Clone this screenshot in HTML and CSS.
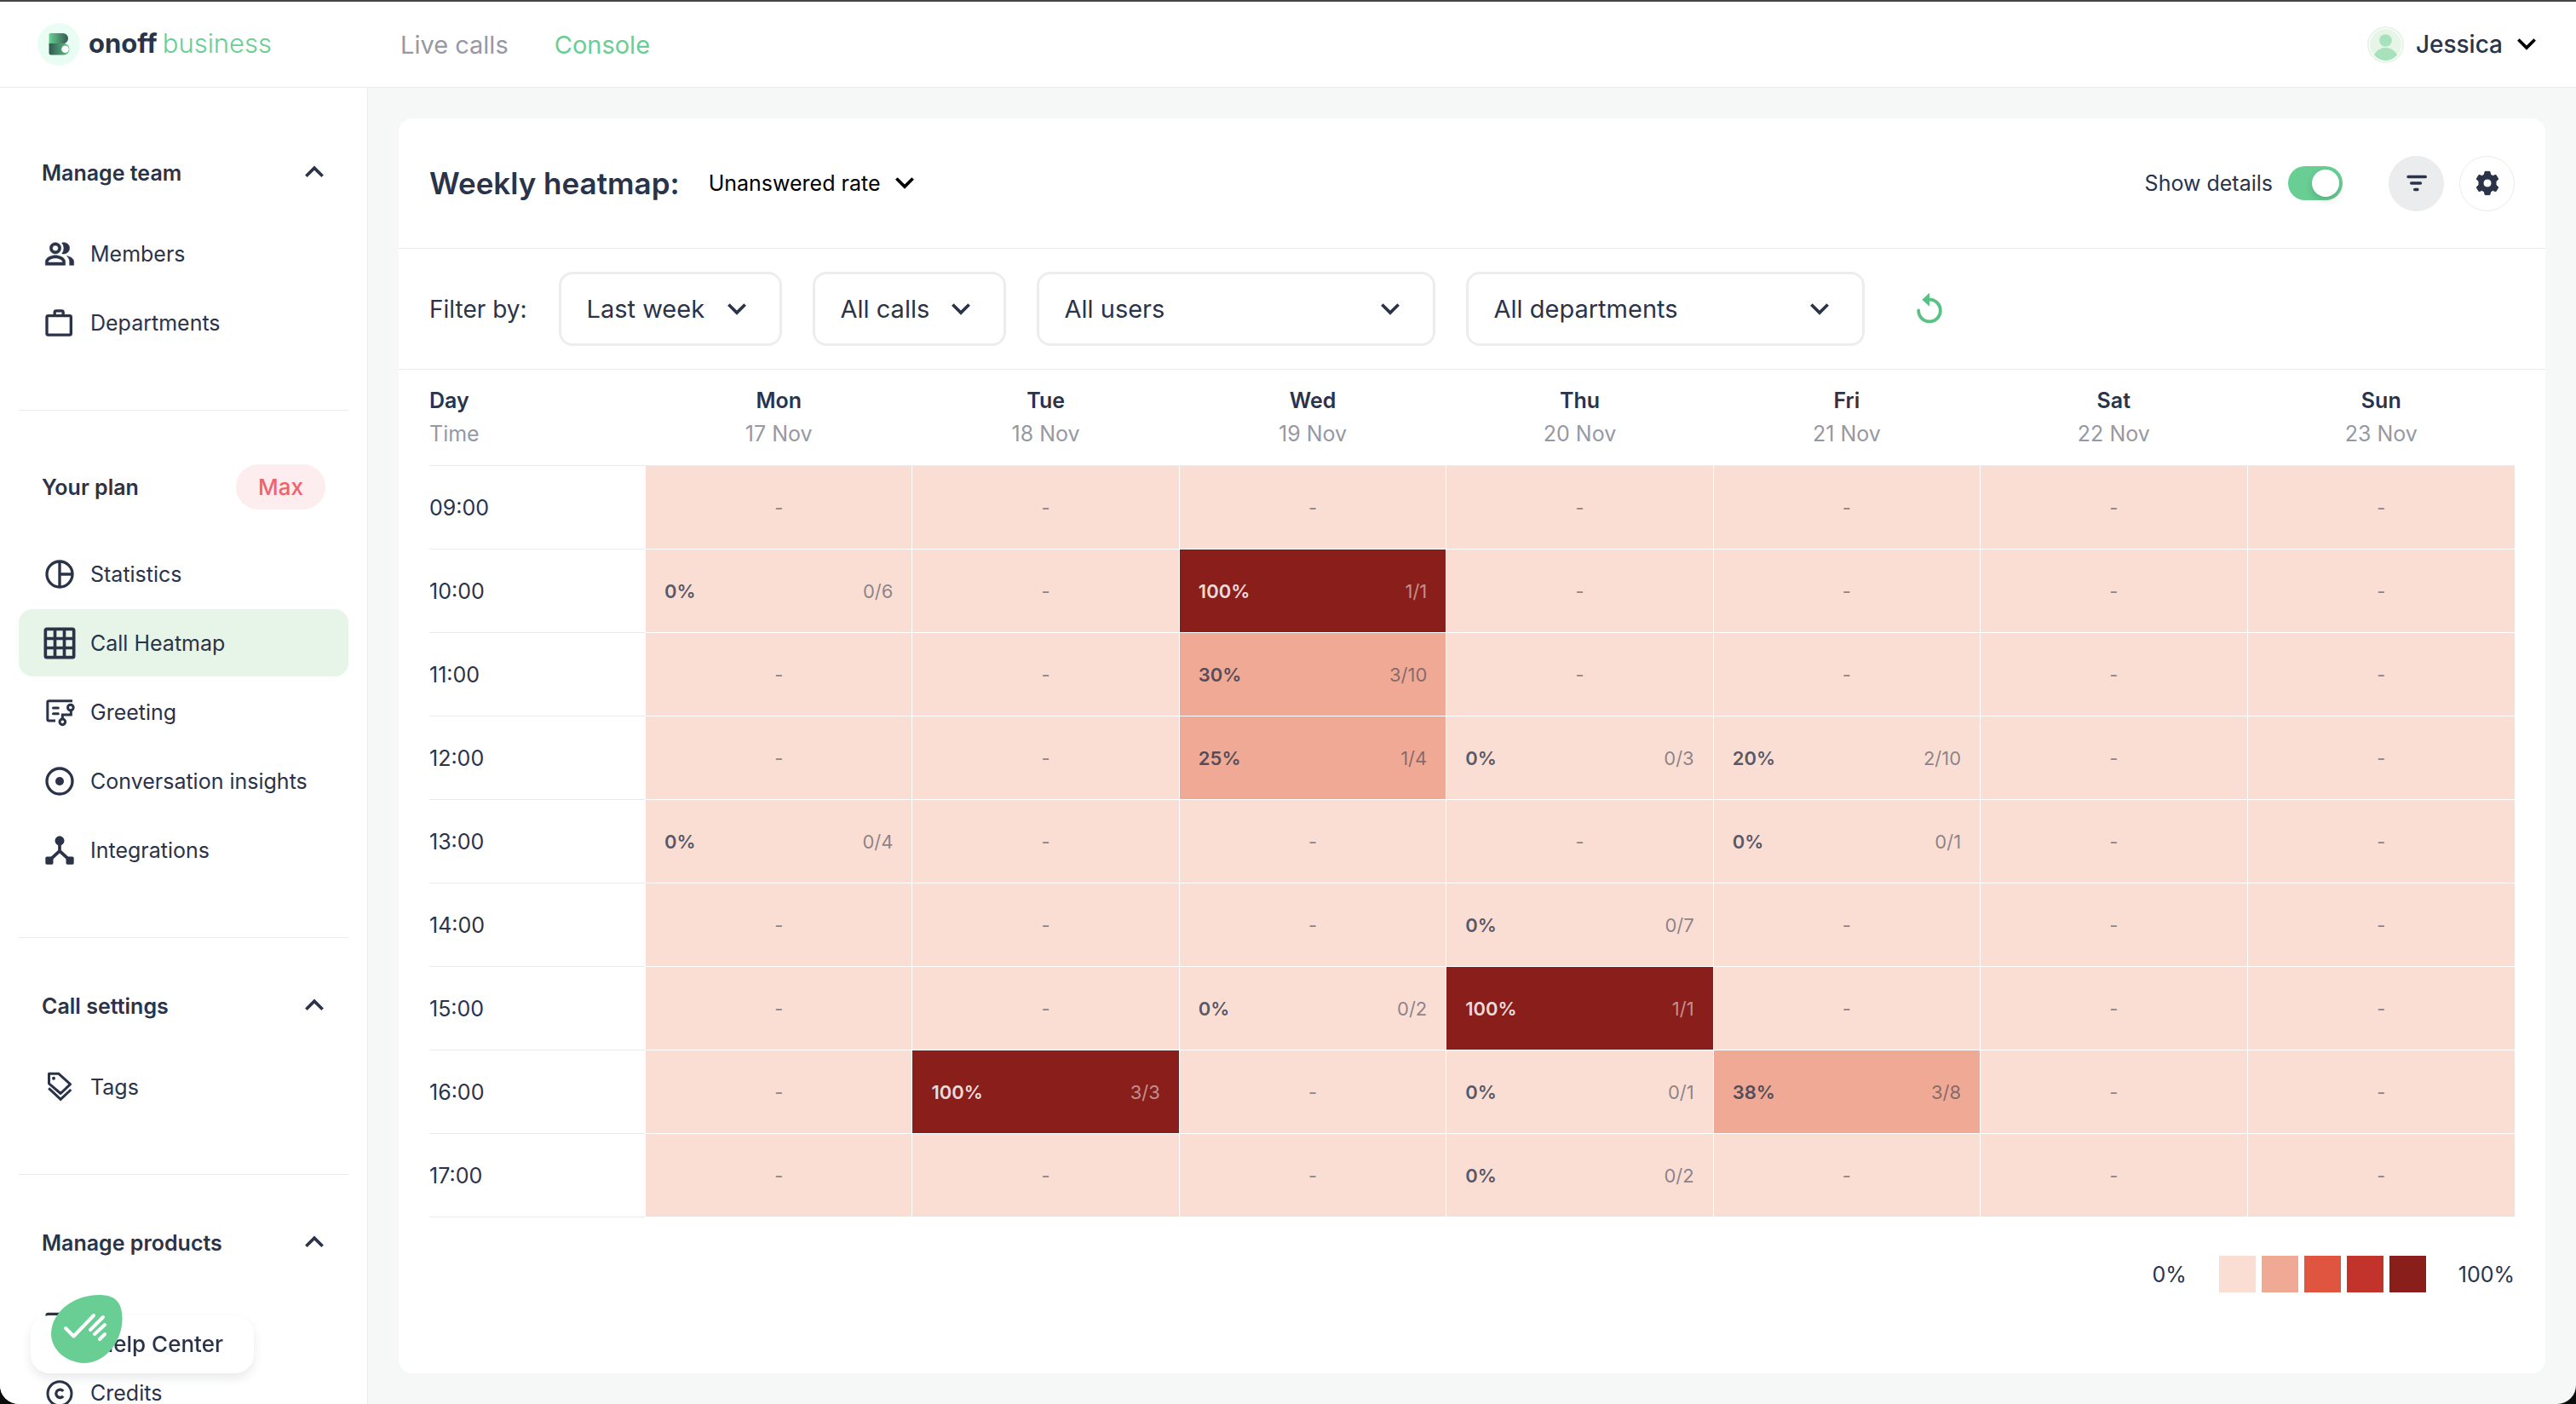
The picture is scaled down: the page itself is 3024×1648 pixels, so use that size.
FILE: index.html
```html
<!DOCTYPE html>
<html lang="en">

<head>
    <meta charset="UTF-8">
    <title>Onoff Business - Call Heatmap</title>
    <link rel="stylesheet" href="styles.css">
</head>

<body>

    <!-- shared icons -->
    <svg class="sprite" aria-hidden="true">
        <symbol id="chevron-down" viewBox="0 0 24 24">
            <path d="M7 9.5l5 5 5-5" fill="none" stroke="currentColor" stroke-width="2.2" stroke-linecap="square" />
        </symbol>
        <symbol id="chevron-up" viewBox="0 0 24 24">
            <path d="M7 13.5l5-5 5 5" fill="none" stroke="currentColor" stroke-width="2.2" stroke-linecap="square" />
        </symbol>
    </svg>

    <header class="topbar">
        <a class="logo" href="#">
            <svg class="logo-mark" viewBox="0 0 50 50">
                <defs>
                    <linearGradient id="mark" x1="0" x2="1">
                        <stop offset="0" stop-color="#68ce93" />
                        <stop offset="1" stop-color="#35594f" />
                    </linearGradient>
                    <linearGradient id="mark2" x1="0" x2="1">
                        <stop offset="0" stop-color="#2f5a50" />
                        <stop offset="1" stop-color="#62c48c" />
                    </linearGradient>
                </defs>
                <circle cx="25" cy="25" r="25" fill="#e9fdf4" />
                <path d="M15 12h15a6 6 0 0 1 6 6c0 3-2 5-4 6H13.500V14a2 2 0 0 1 1.500-2z" fill="url(#mark)" />
                <path d="M13.500 24h18a6.800 6.800 0 0 1 0 13.500H16a2.500 2.500 0 0 1-2.500-2.500z" fill="url(#mark2)" />
                <circle cx="32.500" cy="30.700" r="4.300" fill="#fff" />
            </svg>
            <span class="logo-text"><strong>onoff</strong><span>business</span></span>
        </a>
        <nav class="topnav">
            <a href="#">Live calls</a>
            <a href="#" class="active">Console</a>
        </nav>
        <button class="account" type="button">
            <svg class="avatar" viewBox="0 0 43 43">
                <circle cx="21.500" cy="21.500" r="20.500" fill="#fff" stroke="#e7f5e8" stroke-width="2" />
                <circle cx="21.500" cy="21.500" r="18.500" fill="#e7f5e8" />
                <circle cx="21.500" cy="16.500" r="7.300" fill="#a7e2bc" />
                <path d="M8 33.500c2.500-5.500 8-8.500 13.500-8.500S32.500 28 35 33.500c-3.500 4-8 6.500-13.500 6.500S11.500 37.500 8 33.500z" fill="#a7e2bc" />
            </svg>
            Jessica
            <svg class="icon"><use href="#chevron-down" /></svg>
        </button>
    </header>

    <div class="layout">
        <aside class="sidebar">
            <section class="group">
                <h2>Manage team <svg class="icon"><use href="#chevron-up" /></svg></h2>
                <a href="#">
                    <svg class="icon" viewBox="0 0 24 24" fill="currentColor">
                        <path d="M9 12a4 4 0 1 0 0-8 4 4 0 0 0 0 8zm0-6a2 2 0 1 1 0 4 2 2 0 0 1 0-4zM9 13c-2.700 0-7 1.400-7 4.500V20h14v-2.500C16 14.400 11.700 13 9 13zm5 5H4v-.500C4 16.200 6.800 15 9 15s5 1.200 5 2.500zM15 12a4 4 0 0 0 0-8c-.500 0-1 .100-1.400.200a5.900 5.900 0 0 1 0 7.600c.400.100.900.200 1.400.200zM17 13.500c1.200 1 2 2.300 2 4V20h3v-2.500c0-2.200-2.300-3.500-5-4z" stroke="currentColor" stroke-width=".3" />
                    </svg>
                    Members
                </a>
                <a href="#">
                    <svg class="icon" viewBox="0 0 24 24" fill="none" stroke="currentColor" stroke-width="2">
                        <rect x="3" y="7" width="17" height="13.500" rx="1" />
                        <path d="M8.500 7V4.500a1 1 0 0 1 1-1h4a1 1 0 0 1 1 1V7" />
                    </svg>
                    Departments
                </a>
            </section>

            <section class="group plan">
                <h2>Your plan <span class="badge">Max</span></h2>
                <a href="#">
                    <svg class="icon" viewBox="0 0 24 24" fill="none" stroke="currentColor" stroke-width="2">
                        <circle cx="12" cy="12" r="9" />
                        <path d="M12 3v18M12 12h9" />
                    </svg>
                    Statistics
                </a>
                <a href="#" class="active">
                    <svg class="icon" viewBox="0 0 24 24" fill="none" stroke="currentColor" stroke-width="2.200">
                        <rect x="2" y="2" width="20" height="20" rx="1" />
                        <path d="M8.700 2v20M15.300 2v20M2 8.700h20M2 15.300h20" />
                    </svg>
                    Call Heatmap
                </a>
                <a href="#">
                    <svg class="icon" viewBox="0 0 24 24" fill="none" stroke="currentColor" stroke-width="1.800">
                        <path d="M21 4H4.500a1 1 0 0 0-1 1v12a1 1 0 0 0 1 1H9" />
                        <path d="M7.500 9H11M7.500 13H11" stroke-linecap="round" />
                        <circle cx="19.700" cy="8.700" r="2" />
                        <circle cx="14" cy="18.800" r="2" />
                        <path d="M14 17v-3.200h6v-3" />
                    </svg>
                    Greeting
                </a>
                <a href="#">
                    <svg class="icon" viewBox="0 0 24 24" fill="none" stroke="currentColor" stroke-width="2">
                        <circle cx="12" cy="12" r="9" />
                        <circle cx="12" cy="12" r="3" fill="currentColor" stroke="none" />
                    </svg>
                    Conversation insights
                </a>
                <a href="#">
                    <svg class="icon" viewBox="0 0 24 24" fill="currentColor">
                        <circle cx="12" cy="5.300" r="3.300" />
                        <rect x="2" y="16.500" width="5.500" height="5.500" rx="1" />
                        <rect x="16.500" y="16.500" width="5.500" height="5.500" rx="1" />
                        <path d="M12 6v7M5 19l7-6.500 7 6.500" fill="none" stroke="currentColor" stroke-width="2.200" />
                    </svg>
                    Integrations
                </a>
            </section>

            <section class="group">
                <h2>Call settings <svg class="icon"><use href="#chevron-up" /></svg></h2>
                <a href="#">
                    <svg class="icon" viewBox="0 0 24 24" fill="none" stroke="currentColor" stroke-width="1.800">
                        <path d="M4.500 2.500h6.700l8.300 7.500-6.800 6.500L4.500 9.500z" stroke-linejoin="round" />
                        <path d="M4.300 12.800l8.400 7.800 7.300-6.800" />
                        <circle cx="7.800" cy="5.800" r="1.200" fill="currentColor" stroke="none" />
                    </svg>
                    Tags
                </a>
            </section>

            <section class="group">
                <h2>Manage products <svg class="icon"><use href="#chevron-up" /></svg></h2>
                <a href="#" aria-label="Billing">
                    <svg class="icon" viewBox="0 0 24 24" fill="none" stroke="currentColor" stroke-width="2">
                        <rect x="3" y="5" width="18" height="13" rx="1" />
                    </svg>
                </a>
                <a href="#">
                    <svg class="icon" viewBox="0 0 24 24" fill="none" stroke="currentColor" stroke-width="1.800">
                        <circle cx="12" cy="12.500" r="8.400" />
                        <path d="M14.500 10.800a2.800 2.800 0 1 0 0 3.400" stroke-width="2" />
                    </svg>
                    Credits
                </a>
            </section>
        </aside>

        <main class="content">
            <div class="card">
                <div class="card-header">
                    <h1>Weekly heatmap:</h1>
                    <div class="select metric">
                        <select aria-label="Metric">
                            <option>Unanswered rate</option>
                        </select>
                        <svg class="icon"><use href="#chevron-down" /></svg>
                    </div>
                    <div class="actions">
                        <label for="details">Show details</label>
                        <input type="checkbox" id="details" class="toggle" checked>
                        <button type="button" class="round active" aria-label="Filters">
                            <svg class="icon" viewBox="0 0 24 24" stroke="currentColor" stroke-width="2" stroke-linecap="round">
                                <path d="M6 7.500h12.200M8.200 12h6.500M10.600 16.500h2" />
                            </svg>
                        </button>
                        <button type="button" class="round" aria-label="Settings">
                            <svg class="icon" viewBox="0 0 24 24" fill="currentColor">
                                <path fill-rule="evenodd" d="M10.300 3.800h3.400l.5 2.200 1.600.9 2.200-.7 1.700 2.900-1.700 1.600v2.600l1.700 1.600-1.700 2.900-2.200-.7-1.600.9-.5 2.200h-3.400l-.5-2.200-1.600-.9-2.200.7-1.700-2.900L6 13.300v-2.600L4.300 9.100 6 6.200l2.200.7 1.600-.9zM12 9a3 3 0 1 0 0 6 3 3 0 0 0 0-6z" stroke="currentColor" stroke-width=".6" stroke-linejoin="round" />
                            </svg>
                        </button>
                    </div>
                </div>

                <div class="filters">
                    <span>Filter by:</span>
                    <div class="select box period">
                        <select aria-label="Period">
                            <option>Last week</option>
                        </select>
                        <svg class="icon"><use href="#chevron-down" /></svg>
                    </div>
                    <div class="select box calls">
                        <select aria-label="Calls">
                            <option>All calls</option>
                        </select>
                        <svg class="icon"><use href="#chevron-down" /></svg>
                    </div>
                    <div class="select box wide">
                        <select aria-label="Users">
                            <option>All users</option>
                        </select>
                        <svg class="icon"><use href="#chevron-down" /></svg>
                    </div>
                    <div class="select box wide">
                        <select aria-label="Departments">
                            <option>All departments</option>
                        </select>
                        <svg class="icon"><use href="#chevron-down" /></svg>
                    </div>
                    <button type="button" class="reset" aria-label="Reset filters">
                        <svg class="icon" viewBox="0 0 24 24">
                            <path d="M12 5.200a7.700 7.700 0 1 1-7.700 7.700" fill="none" stroke="currentColor" stroke-width="2.300" stroke-linecap="round" />
                            <path d="M12 .5v9.500L6.800 5.200z" fill="currentColor" />
                        </svg>
                    </button>
                </div>

                <div class="heatmap">
                    <table>
                        <thead>
                            <tr>
                                <th>Day<small>Time</small></th>
                                <th>Mon<small>17 Nov</small></th>
                                <th>Tue<small>18 Nov</small></th>
                                <th>Wed<small>19 Nov</small></th>
                                <th>Thu<small>20 Nov</small></th>
                                <th>Fri<small>21 Nov</small></th>
                                <th>Sat<small>22 Nov</small></th>
                                <th>Sun<small>23 Nov</small></th>
                            </tr>
                        </thead>
                        <tbody>
                            <tr>
                                <th>09:00</th>
                                <td>-</td>
                                <td>-</td>
                                <td>-</td>
                                <td>-</td>
                                <td>-</td>
                                <td>-</td>
                                <td>-</td>
                            </tr>
                            <tr>
                                <th>10:00</th>
                                <td><div class="cell"><b>0%</b><span>0/6</span></div></td>
                                <td>-</td>
                                <td class="level-5"><div class="cell"><b>100%</b><span>1/1</span></div></td>
                                <td>-</td>
                                <td>-</td>
                                <td>-</td>
                                <td>-</td>
                            </tr>
                            <tr>
                                <th>11:00</th>
                                <td>-</td>
                                <td>-</td>
                                <td class="level-2"><div class="cell"><b>30%</b><span>3/10</span></div></td>
                                <td>-</td>
                                <td>-</td>
                                <td>-</td>
                                <td>-</td>
                            </tr>
                            <tr>
                                <th>12:00</th>
                                <td>-</td>
                                <td>-</td>
                                <td class="level-2"><div class="cell"><b>25%</b><span>1/4</span></div></td>
                                <td><div class="cell"><b>0%</b><span>0/3</span></div></td>
                                <td><div class="cell"><b>20%</b><span>2/10</span></div></td>
                                <td>-</td>
                                <td>-</td>
                            </tr>
                            <tr>
                                <th>13:00</th>
                                <td><div class="cell"><b>0%</b><span>0/4</span></div></td>
                                <td>-</td>
                                <td>-</td>
                                <td>-</td>
                                <td><div class="cell"><b>0%</b><span>0/1</span></div></td>
                                <td>-</td>
                                <td>-</td>
                            </tr>
                            <tr>
                                <th>14:00</th>
                                <td>-</td>
                                <td>-</td>
                                <td>-</td>
                                <td><div class="cell"><b>0%</b><span>0/7</span></div></td>
                                <td>-</td>
                                <td>-</td>
                                <td>-</td>
                            </tr>
                            <tr>
                                <th>15:00</th>
                                <td>-</td>
                                <td>-</td>
                                <td><div class="cell"><b>0%</b><span>0/2</span></div></td>
                                <td class="level-5"><div class="cell"><b>100%</b><span>1/1</span></div></td>
                                <td>-</td>
                                <td>-</td>
                                <td>-</td>
                            </tr>
                            <tr>
                                <th>16:00</th>
                                <td>-</td>
                                <td class="level-5"><div class="cell"><b>100%</b><span>3/3</span></div></td>
                                <td>-</td>
                                <td><div class="cell"><b>0%</b><span>0/1</span></div></td>
                                <td class="level-2"><div class="cell"><b>38%</b><span>3/8</span></div></td>
                                <td>-</td>
                                <td>-</td>
                            </tr>
                            <tr>
                                <th>17:00</th>
                                <td>-</td>
                                <td>-</td>
                                <td>-</td>
                                <td><div class="cell"><b>0%</b><span>0/2</span></div></td>
                                <td>-</td>
                                <td>-</td>
                                <td>-</td>
                            </tr>
                        </tbody>
                    </table>
                    <div class="legend">
                        <span>0%</span>
                        <div class="swatches">
                            <i class="level-1"></i>
                            <i class="level-2"></i>
                            <i class="level-3"></i>
                            <i class="level-4"></i>
                            <i class="level-5"></i>
                        </div>
                        <span>100%</span>
                    </div>
                </div>
            </div>
        </main>
    </div>

    <a class="help" href="#">
        Help Center
        <svg class="blob" viewBox="0 0 84 80">
            <path d="M0 45C1 17 30 0 56 0c19 0 27 8 27.500 27C84 52 66 80 38 80 18 79 0 65 0 45z" fill="#68ce93" />
            <path d="M17 39l9.500 9.500L50 24M61 26L46 41M63 35L51 46M63 46l-6 6" fill="none" stroke="#fff" stroke-width="4" stroke-linecap="round" stroke-linejoin="round" />
        </svg>
    </a>

</body>

</html>
```
FILE: styles.css
```css
* {
    box-sizing: border-box;
}

html {
    background: #0c0c0c;
}

body {
    margin: 0;
    height: 100vh;
    display: flex;
    flex-direction: column;
    overflow: hidden;
    border-top: 2px solid #444;
    border-radius: 0 0 22px 22px;
    background: #f6f8f7;
    color: #2b3349;
    font-family: Inter, "Liberation Sans", sans-serif;
    font-size: 25px;
}

a {
    color: inherit;
    text-decoration: none;
}

button,
select {
    font: inherit;
    color: inherit;
    border: none;
    background: none;
    padding: 0;
    cursor: pointer;
}

.sprite {
    display: none;
}

.icon {
    width: 40px;
    height: 40px;
    flex: none;
}

/* top bar */
.topbar {
    display: flex;
    align-items: center;
    height: 101px;
    flex: none;
    padding: 0 38px 0 44px;
    background: white;
    border-bottom: 1px solid #e9ecec;
    font-size: 29px;
}

.logo {
    display: flex;
    align-items: center;
    gap: 10px;
    width: 426px;
}

.logo-mark {
    width: 50px;
    height: 50px;
}

.logo-text {
    display: flex;
    gap: 6px;
    padding-bottom: 4px;
    font-size: 31px;
}

.logo-text span {
    color: #68ce93;
    font-weight: 300;
}

.topnav {
    display: flex;
    gap: 54px;
    color: #9699a4;
}

.topnav .active {
    color: #68ce93;
}

.account {
    display: flex;
    align-items: center;
    gap: 14px;
    margin-left: auto;
    font-size: 28px;
    font-weight: 500;
}

.account .icon {
    color: black;
    margin-left: -6px;
}

.avatar {
    width: 43px;
    height: 43px;
}

/* sidebar */
.layout {
    flex: 1;
    display: flex;
    min-height: 0;
}

.sidebar {
    width: 432px;
    flex: none;
    overflow: hidden;
    padding: 20px 22px 0;
    background: white;
    border-right: 1px solid #e9ecec;
}

.group {
    display: flex;
    flex-direction: column;
    gap: 2px;
    padding: 55px 0 63px;
    border-bottom: 1px solid #e9ecec;
}

.group h2 {
    display: flex;
    align-items: center;
    justify-content: space-between;
    height: 50px;
    margin: 0 0 28px;
    padding: 0 20px 0 27px;
    font-size: 25px;
    font-weight: 600;
}

.group a {
    display: flex;
    align-items: center;
    gap: 16px;
    height: 79px;
    padding-left: 28px;
    border-radius: 16px;
}

.group a.active {
    background: #e7f5e8;
}

.plan {
    padding-top: 63px;
}

.plan h2 {
    height: 53px;
    margin-bottom: 34px;
}

.badge {
    padding: 0 26px;
    margin-right: 7px;
    line-height: 53px;
    border-radius: 27px;
    background: #fdedee;
    color: #f0626c;
    font-size: 26px;
    font-weight: 500;
}

/* card */
.content {
    flex: 1;
    display: flex;
    padding: 36px;
}

.card {
    flex: 1;
    background: white;
    border-radius: 16px;
}

.card-header {
    display: flex;
    align-items: center;
    height: 153px;
    padding: 0 36px;
    border-bottom: 1px solid #ebebeb;
}

h1 {
    margin: 0 34px 0 0;
    font-size: 35px;
    font-weight: 600;
}

.select {
    position: relative;
    display: flex;
    align-items: center;
}

.select select {
    width: 100%;
    appearance: none;
    outline: none;
}

.select .icon {
    position: absolute;
    right: 0;
    pointer-events: none;
}

.metric {
    color: black;
}

.metric select {
    padding-right: 48px;
}

.actions {
    display: flex;
    align-items: center;
    gap: 18px;
    margin-left: auto;
}

.toggle {
    appearance: none;
    width: 64px;
    height: 40px;
    margin: 0 36px 0 0;
    padding: 4px;
    border-radius: 20px;
    background: #d5d7db;
    cursor: pointer;
}

.toggle::before {
    content: "";
    display: block;
    width: 32px;
    height: 32px;
    border-radius: 50%;
    background: white;
    box-shadow: 0 4px 8px rgba(0, 0, 0, 0.15);
}

.toggle:checked {
    background: #68ce93;
}

.toggle:checked::before {
    margin-left: auto;
}

.round {
    display: flex;
    align-items: center;
    justify-content: center;
    width: 65px;
    height: 65px;
    border: 1px solid #ebebeb;
    border-radius: 50%;
}

.round.active {
    background: #ebecee;
}

.filters {
    display: flex;
    align-items: center;
    gap: 36px;
    padding: 27px 36px;
    border-bottom: 1px solid #ebebeb;
    font-size: 29px;
}

.filters > span {
    margin-right: 1px;
    font-size: 28px;
}

.box {
    height: 87px;
    border: 3px solid #ededed;
    border-radius: 16px;
}

.box select {
    height: 100%;
    padding-left: 30px;
}

.box .icon {
    right: 30px;
}

.period {
    width: 262px;
}

.calls {
    width: 227px;
}

.wide {
    width: 468px;
}

.reset {
    display: flex;
    margin-left: 20px;
    color: #58c184;
}

/* heatmap */
.heatmap {
    padding: 0 36px;
}

table {
    width: 100%;
    table-layout: fixed;
    border-collapse: separate;
    border-spacing: 0;
}

th,
td {
    padding: 0;
    border: 0 solid white;
    border-width: 0 1px 1px 0;
    text-align: center;
}

th:last-child,
td:last-child {
    border-right: none;
}

th:first-child {
    width: 254px;
    text-align: left;
}

thead th {
    height: 113px;
    border-bottom-color: #ebebeb;
    line-height: 39px;
    font-weight: 600;
}

th small {
    display: block;
    font-size: 25px;
    font-weight: 400;
    color: #9699a4;
}

tbody th {
    height: 98px;
    border-bottom-color: #ebebeb;
    font-weight: 400;
}

td {
    background: #fbded3;
    color: rgba(43, 51, 73, 0.55);
    font-size: 22px;
}

.cell {
    display: flex;
    justify-content: space-between;
    padding: 0 22px;
}

.cell b {
    font-weight: 600;
    color: rgba(43, 51, 73, 0.8);
}

.level-1 {
    background: #fbded3;
}

.level-2 {
    background: #f0a994;
}

.level-3 {
    background: #e05540;
}

.level-4 {
    background: #c1332b;
}

.level-5 {
    background: #8a1e1b;
    color: rgba(255, 255, 255, 0.5);
}

.level-5 b {
    color: rgba(255, 255, 255, 0.85);
}

.legend {
    display: flex;
    align-items: center;
    justify-content: flex-end;
    gap: 38px;
    margin-top: 45px;
}

.swatches {
    display: flex;
    gap: 7px;
}

.swatches i {
    width: 43px;
    height: 43px;
}

/* floating help button */
.help {
    position: fixed;
    left: 36px;
    bottom: 36px;
    width: 262px;
    height: 68px;
    padding-right: 36px;
    border-radius: 22px;
    background: white;
    box-shadow: 0 6px 12px rgba(43, 51, 73, 0.1);
    font-size: 26px;
    font-weight: 500;
    line-height: 68px;
    text-align: right;
}

.blob {
    position: absolute;
    left: 24px;
    bottom: 12px;
    width: 84px;
    height: 80px;
}
```
